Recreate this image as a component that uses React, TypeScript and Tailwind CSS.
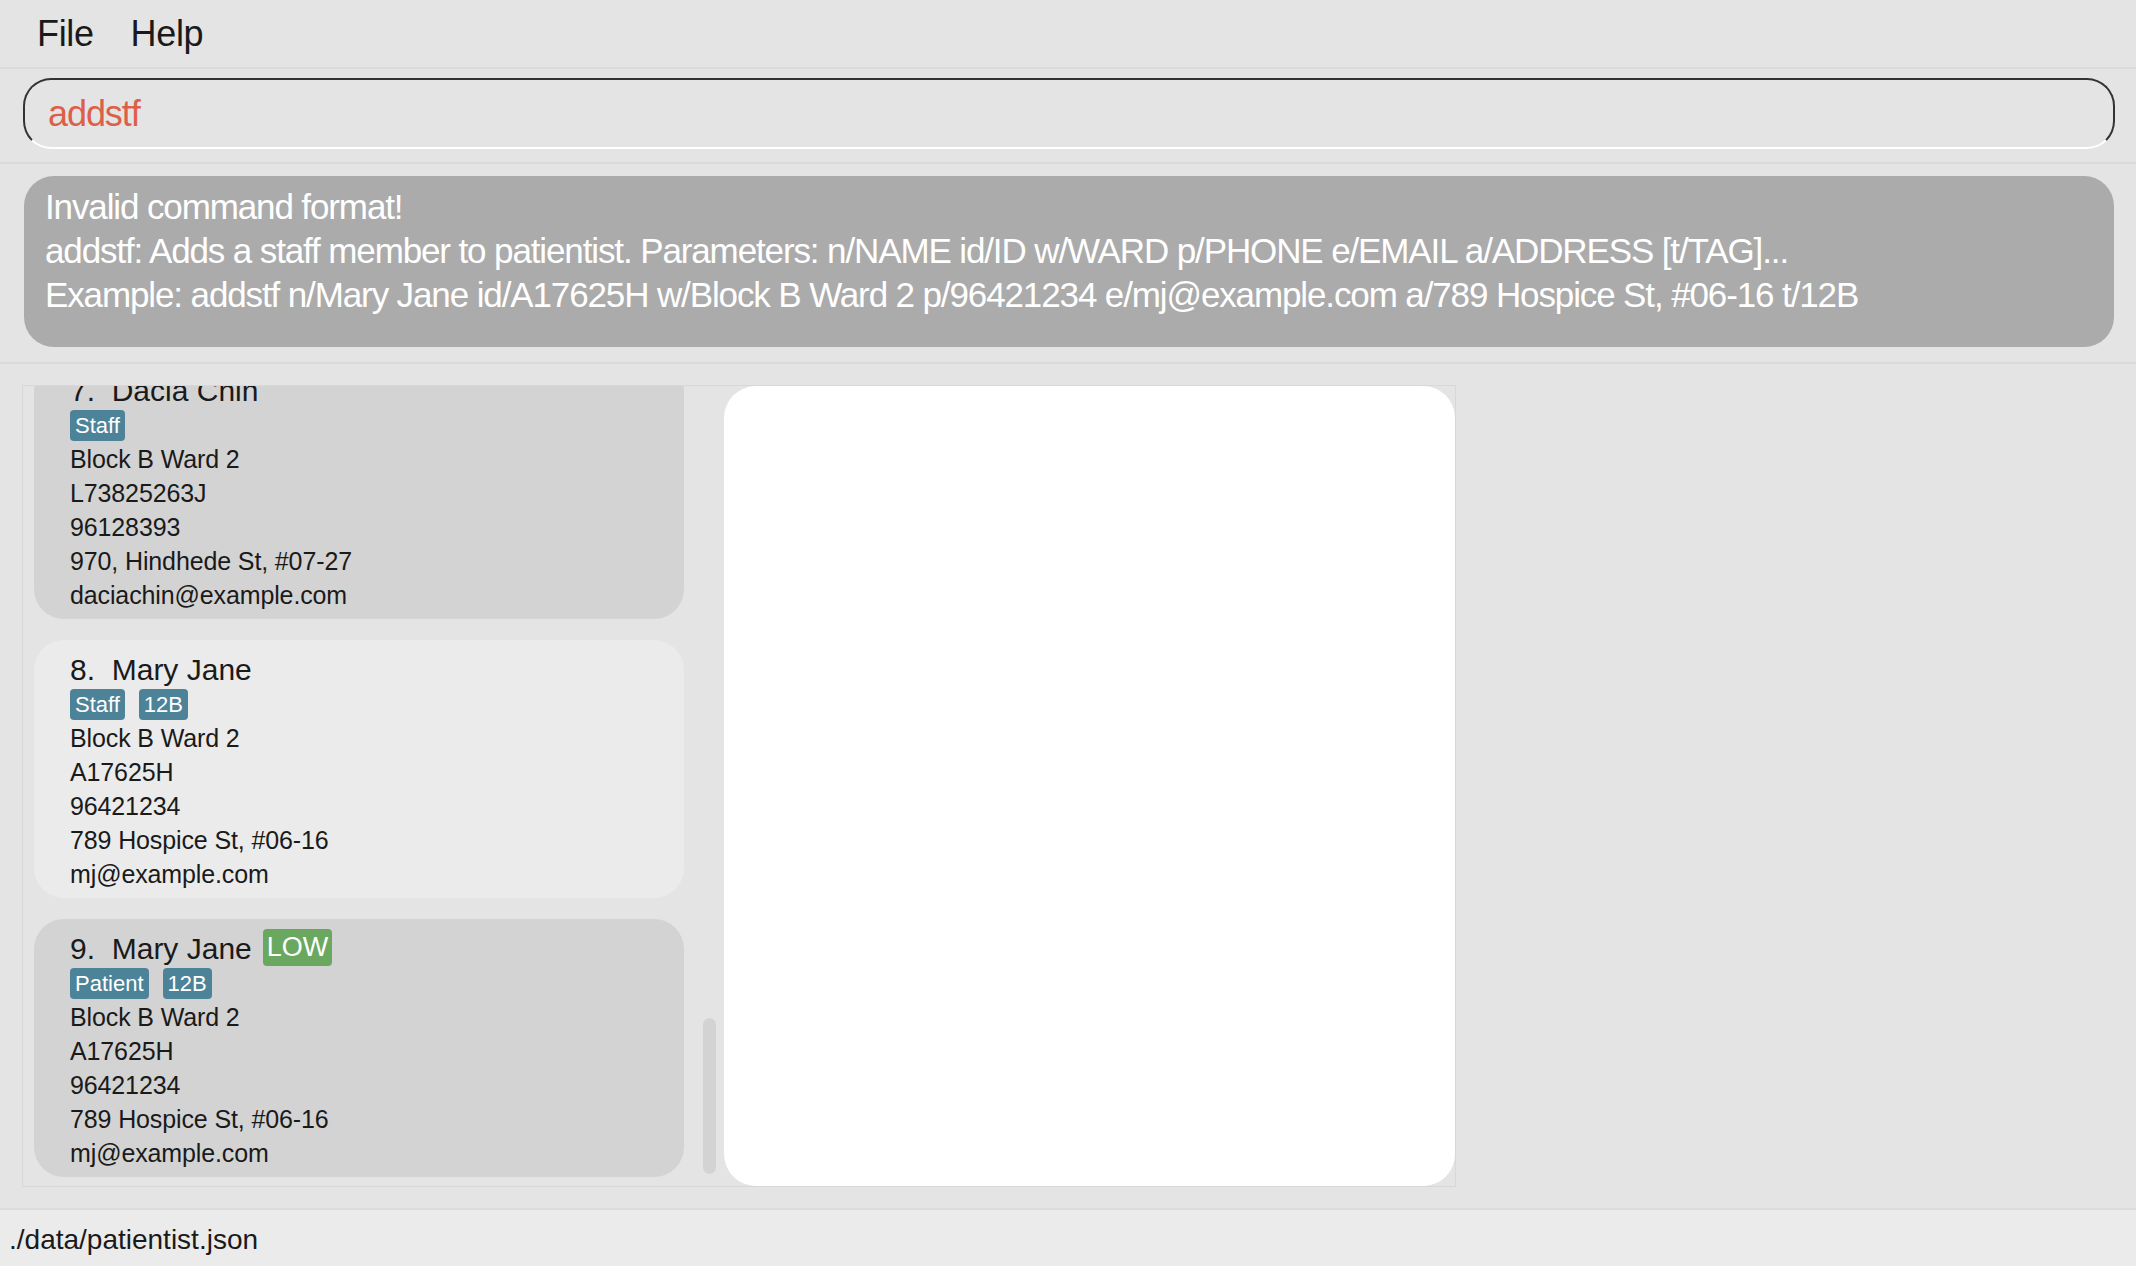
import React from 'react'

type Person = {
  index: number
  name: string
  priority?: string
  tags: string[]
  ward: string
  id: string
  phone: string
  address: string
  email: string
}

const people: Person[] = [
  {
    index: 7,
    name: 'Dacia Chin',
    tags: ['Staff'],
    ward: 'Block B Ward 2',
    id: 'L73825263J',
    phone: '96128393',
    address: '970, Hindhede St, #07-27',
    email: 'daciachin@example.com',
  },
  {
    index: 8,
    name: 'Mary Jane',
    tags: ['Staff', '12B'],
    ward: 'Block B Ward 2',
    id: 'A17625H',
    phone: '96421234',
    address: '789 Hospice St, #06-16',
    email: 'mj@example.com',
  },
  {
    index: 9,
    name: 'Mary Jane',
    priority: 'LOW',
    tags: ['Patient', '12B'],
    ward: 'Block B Ward 2',
    id: 'A17625H',
    phone: '96421234',
    address: '789 Hospice St, #06-16',
    email: 'mj@example.com',
  },
]

const resultLines = [
  'Invalid command format!',
  'addstf: Adds a staff member to patientist. Parameters: n/NAME id/ID w/WARD p/PHONE e/EMAIL a/ADDRESS [t/TAG]...',
  'Example: addstf n/Mary Jane id/A17625H w/Block B Ward 2 p/96421234 e/mj@example.com a/789 Hospice St, #06-16 t/12B',
]

const PersonCard: React.FC<{ person: Person; dark: boolean }> = ({ person, dark }) => {
  return (
    <div
      className={`shrink-0 w-[650px] rounded-[30px] pl-[36px] pt-[10px] pb-[7px] text-[#1a1a1a] ${
        dark ? 'bg-[#d3d3d3]' : 'bg-[#ebebeb]'
      }`}
    >
      {/* name + priority */}
      <div className="flex items-start gap-[11px] h-[39px]">
        <span className="text-[30px] leading-[39px] whitespace-pre">
          {person.index}.{'  '}
          {person.name}
        </span>
        {person.priority && (
          <span className="h-[37px] px-[4px] rounded-[4px] bg-[#6aa860] text-white text-[27px] leading-[37px]">
            {person.priority}
          </span>
        )}
      </div>

      {/* tags */}
      <div className="flex gap-[14px] h-[31px]">
        {person.tags.map((t) => (
          <span
            key={t}
            className="h-[31px] px-[5px] rounded-[4px] bg-[#4d8398] text-white text-[22px] leading-[31px]"
          >
            {t}
          </span>
        ))}
      </div>

      {/* details */}
      <div className="mt-[1px] text-[25px] leading-[34px] tracking-[-0.005em]">
        <div>{person.ward}</div>
        <div>{person.id}</div>
        <div>{person.phone}</div>
        <div>{person.address}</div>
        <div>{person.email}</div>
      </div>
    </div>
  )
}

const App: React.FC = () => {
  return (
    <div className="w-[2136px] h-[1266px] flex flex-col overflow-hidden bg-[#e4e4e4] font-['Liberation_Sans',Arial,sans-serif]">
      {/* Menu bar */}
      <div className="h-[67px] shrink-0 flex items-center gap-[37px] pl-[37px] text-[36px] leading-[67px] tracking-[-0.01em] text-[#1a1a1a]">
        <span>File</span>
        <span>Help</span>
      </div>

      {/* Command box */}
      <div className="h-[95px] shrink-0 border-t-2 border-[#dadada] pt-[9px] pl-[23px] pr-[21px]">
        <input
          readOnly
          value="addstf"
          className="w-full h-[71px] rounded-[28px] border-2 border-[#333333] border-b-white bg-[#e4e4e4] pl-[23px] text-[36px] tracking-[-0.03em] text-[#dc5f4a] outline-none font-['Liberation_Sans',Arial,sans-serif]"
        />
      </div>

      {/* Result display */}
      <div className="h-[200px] shrink-0 border-t-2 border-[#dadada] pt-[12px] pl-[24px] pr-[22px]">
        <div className="h-[171px] rounded-[30px] bg-[#ababab] pl-[21px] pt-[9px] text-white text-[35px] leading-[44px] tracking-[-0.032em] whitespace-nowrap">
          {resultLines.map((l) => (
            <div key={l}>{l}</div>
          ))}
        </div>
      </div>

      {/* Main panels */}
      <div className="flex-1 border-t-2 border-[#dadada] pt-[21px] pl-[22px]">
        <div className="w-[1434px] h-[802px] border border-[#d8d8d8] flex">
          {/* person list, scrolled to bottom */}
          <div className="w-[661px] h-full pl-[11px] pb-[9px] flex flex-col justify-end gap-[21px] overflow-hidden">
            {people.map((p, i) => (
              <PersonCard key={p.index} person={p} dark={i % 2 === 0} />
            ))}
          </div>
          {/* scrollbar */}
          <div className="w-[40px] h-full pl-[19px] pr-[8px] pb-[12px] flex flex-col justify-end">
            <div className="w-[13px] h-[156px] rounded-full bg-[#d3d3d3]" />
          </div>
          {/* detail panel */}
          <div className="flex-1 h-full rounded-[32px] bg-white" />
        </div>
      </div>

      {/* Status bar */}
      <div className="h-[58px] shrink-0 border-t-2 border-[#dcdcdc] bg-[#ebebeb] pl-[9px] pt-[14px] text-[28px] leading-[32px] text-[#1a1a1a]">
        ./data/patientist.json
      </div>
    </div>
  )
}

export default App
